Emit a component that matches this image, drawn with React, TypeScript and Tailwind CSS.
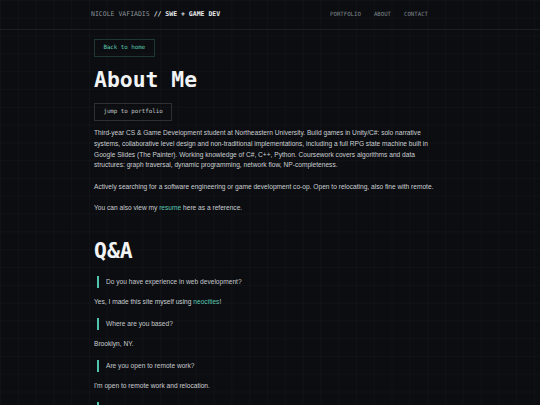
import React from 'react';

const mono = "font-['DejaVu_Sans_Mono',monospace]";

const qa = [
  {
    q: 'Do you have experience in web development?',
    a: (
      <>
        Yes, I made this site myself using{' '}
        <a className="text-[#5cc8b2]">neocities</a>!
      </>
    ),
  },
  { q: 'Where are you based?', a: <>Brooklyn, NY.</> },
  { q: 'Are you open to remote work?', a: <>I&apos;m open to remote work and relocation.</> },
  { q: 'What are you working on right now?', a: <>A narrative game in Unity.</> },
];

export default function App() {
  return (
    <div className="min-h-screen bg-[#0b0d10] bg-[linear-gradient(to_right,rgba(255,255,255,0.018)_1px,transparent_1px),linear-gradient(to_bottom,rgba(255,255,255,0.018)_1px,transparent_1px)] bg-[size:17.8px_17.8px] font-['Liberation_Sans',Arial,sans-serif] text-[#cbcfd3]">
      {/* Header */}
      <header className="h-[30px] border-b border-[#192024]">
        <div className="mx-auto flex h-full w-[358px] items-center justify-between">
          <div className={`${mono} text-[6.5px] text-[#8a9197]`}>
            NICOLE VAFIADIS <span className="font-bold text-[#e8eaec]">// SWE + GAME DEV</span>
          </div>
          <nav className={`${mono} mr-[21px] flex gap-[13px] text-[5.7px] text-[#7f878d]`}>
            <a>PORTFOLIO</a>
            <a>ABOUT</a>
            <a>CONTACT</a>
          </nav>
        </div>
      </header>

      {/* Content */}
      <main className="mx-auto w-[352px] pt-[9px]">
        <a
          className={`${mono} flex h-[18.3px] w-fit items-center border border-[#1d3731] px-[8.4px] text-[5.8px] leading-none text-[#5cc8b2]`}
        >
          Back to home
        </a>

        <h1 className={`${mono} mt-[11.8px] text-[21.4px] font-bold leading-none text-[#f2f3f4]`}>
          About Me
        </h1>

        <a
          className={`${mono} mt-[12.4px] flex h-[17.7px] w-fit items-center border border-[#2a3034] px-[8.4px] text-[5.8px] leading-none text-[#c2c6ca]`}
        >
          jump to portfolio
        </a>

        <div className="mt-[7.6px] text-[6.62px] leading-[10.67px]">
          <p>
            Third-year CS &amp; Game Development student at Northeastern University. Build games in
            Unity/C#: solo narrative systems, collaborative level design and non-traditional
            implementations, including a full RPG state machine built in Google Slides (The
            Painter). Working knowledge of C#, C++, Python. Coursework covers algorithms and data
            structures: graph traversal, dynamic programming, network flow, NP-completeness.
          </p>
          <p className="mt-[10.67px]">
            Actively searching for a software engineering or game development co-op. Open to
            relocating, also fine with remote.
          </p>
          <p className="mt-[10.67px]">
            You can also view my <a className="text-[#5cc8b2]">resume</a> here as a reference.
          </p>

          <h2 className={`${mono} mt-[26.5px] text-[21.4px] font-bold leading-none text-[#f2f3f4]`}>
            Q&amp;A
          </h2>

          <div className="mt-[14.5px]">
            {qa.map((item, i) => (
              <div key={i} className={i > 0 ? 'mt-[10px]' : ''}>
                <blockquote className="ml-[3px] border-l-2 border-[#4fc4ac] pl-[7px] leading-[12px] text-[#c5c9cd]">
                  {item.q}
                </blockquote>
                <p className="mt-[9.4px]">{item.a}</p>
              </div>
            ))}
          </div>
        </div>
      </main>
    </div>
  );
}
